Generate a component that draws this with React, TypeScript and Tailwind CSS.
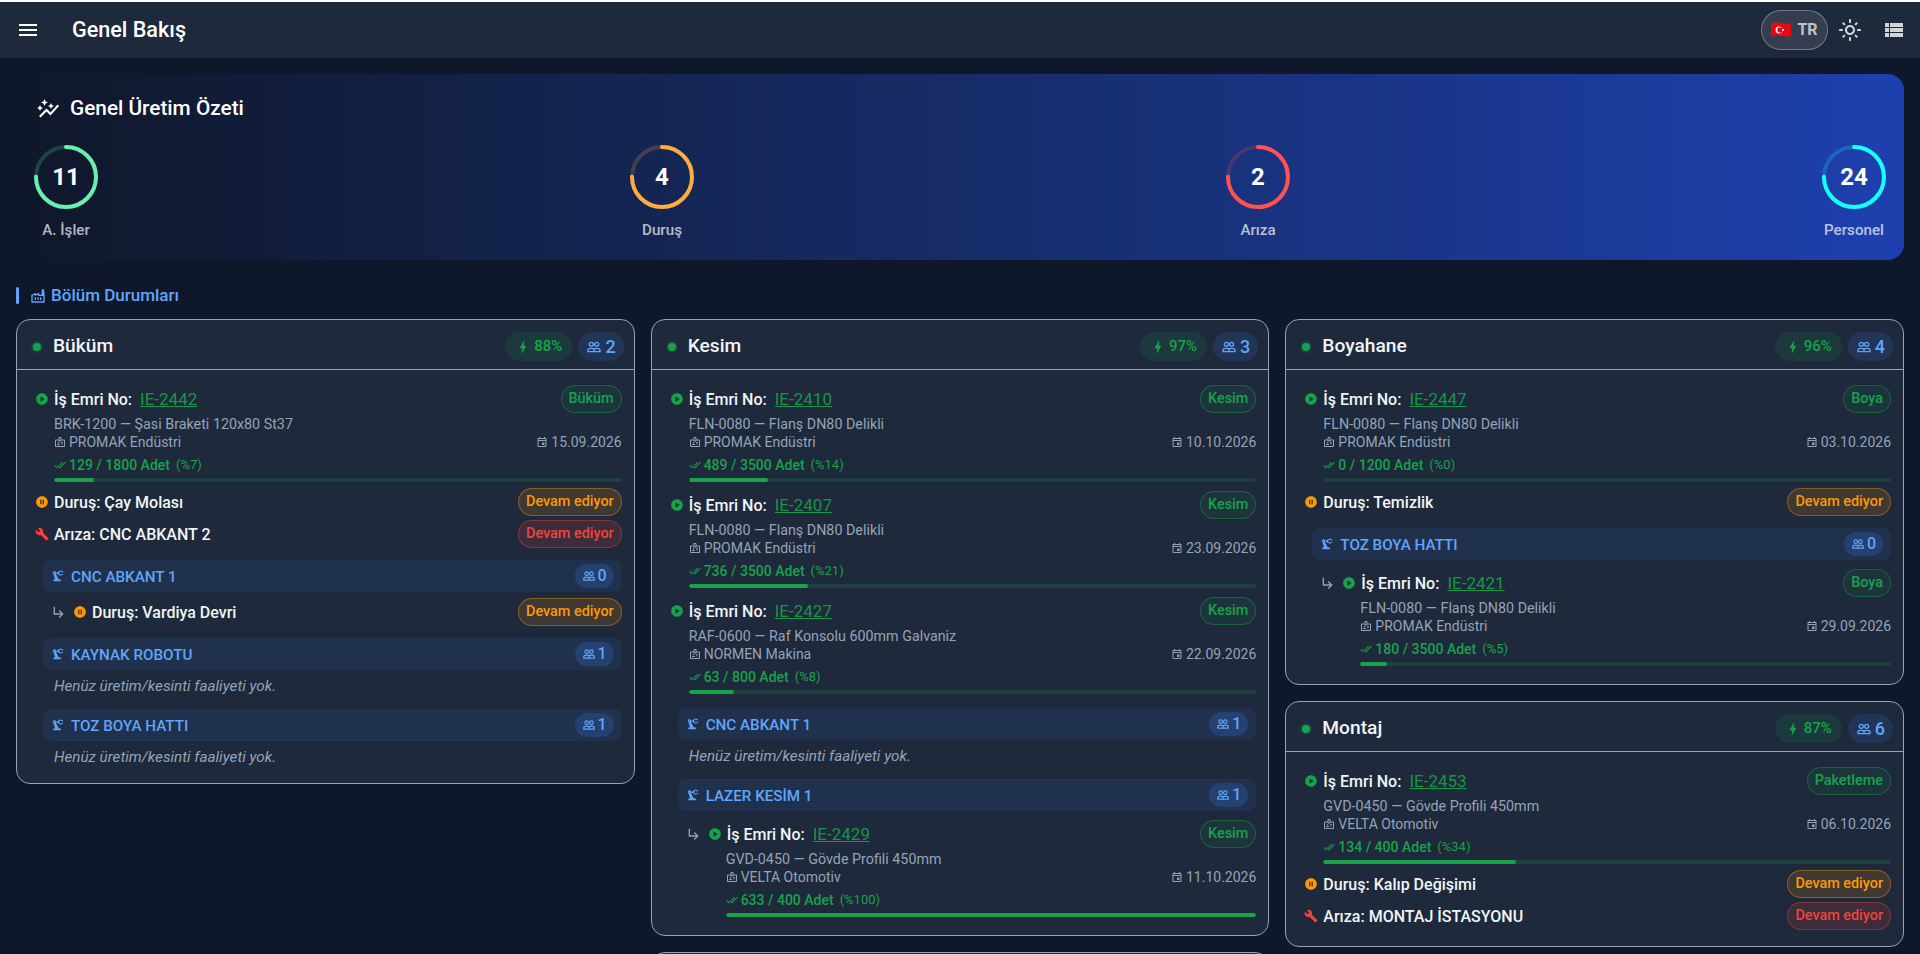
import React from "react";
import {
  MdMenu, MdAutoGraph, MdOutlineLightMode, MdViewList, MdOutlineFactory, MdPlayCircle, MdPauseCircle,
  MdBuild, MdPrecisionManufacturing, MdOutlineBadge, MdBolt, MdSubdirectoryArrowRight, MdOutlineEvent, MdDoneAll,
} from "react-icons/md";

type JobT = { id: string; dept: string; desc: string; cust: string; date: string; qty: string; pct: string; fill: number };

function People({ className }: { className: string }) {
  return (
    <svg viewBox="0 0 24 24" fill="none" stroke="currentColor" strokeWidth="2" className={className}>
      <circle cx="8" cy="8" r="3" />
      <circle cx="16" cy="8" r="3" />
      <path d="M3 19v-2.5c0-1.5 2-2.5 5-2.5 1.6 0 3 .3 4 .9 1-.6 2.4-.9 4-.9 3 0 5 1 5 2.5V19Z" />
      <path d="M12 15v4" />
    </svg>
  );
}

function Chip({ kind, children }: { kind: "green" | "orange" | "red"; children: React.ReactNode }) {
  const cls =
    kind === "green"
      ? "text-[#16a34a] bg-[#16a34a]/10 border-[#16a34a]/40"
      : kind === "orange"
      ? "text-[#ff9800] bg-[#ff9800]/15 border-[#ff9800]/40"
      : "text-[#f44336] bg-[#f44336]/15 border-[#f44336]/40";
  return (
    <span className={`h-[28px] px-[7px] pt-[1px] rounded-full border flex items-center text-[14.4px] leading-none font-medium shrink-0 ${cls}`}>
      {children}
    </span>
  );
}

function Job({ job, sub }: { job: JobT; sub?: boolean }) {
  return (
    <div className={sub ? "ml-[16px]" : ""}>
      <div className="flex items-center h-[28px]">
        {sub && <MdSubdirectoryArrowRight className="text-[#94a3b8] w-[16px] h-[16px] mr-[6px] shrink-0" />}
        <MdPlayCircle className="text-[#16a34a] w-[14px] h-[14px] mr-[5px] shrink-0" />
        <span className="pt-[1px] text-[16px] font-medium text-[#f1f5f9] mr-[8px]">İş Emri No:</span>
        <span className="pt-[1px] text-[17px] text-[#16a34a]/90 underline flex-1">{job.id}</span>
        <Chip kind="green">{job.dept}</Chip>
      </div>
      <div className={sub ? "pl-[40px]" : "pl-[19px]"}>
        <div className="text-[14.3px] leading-[18px] text-[#94a3b8] mt-[2px]">{job.desc}</div>
        <div className="text-[14px] leading-[18px] text-[#94a3b8] flex items-center justify-between">
          <span className="flex items-center gap-[3px]"><MdOutlineBadge className="w-[12px] h-[12px]" />{job.cust}</span>
          <span className="flex items-center gap-[3px]"><MdOutlineEvent className="w-[12px] h-[12px]" />{job.date}</span>
        </div>
        <div className="flex items-center gap-[3px] mt-[5px] h-[18px] text-[#16a34a]">
          <MdDoneAll className="w-[12px] h-[12px]" />
          <span className="text-[14px] font-medium">{job.qty}</span>
          <span className="text-[13px] ml-[3px]">{job.pct}</span>
        </div>
        <div className="h-[4px] mt-[4px] rounded-full bg-[#16a34a]/20 overflow-hidden">
          <div className="h-full bg-[#16a34a] rounded-full" style={{ width: `${job.fill}%` }} />
        </div>
      </div>
    </div>
  );
}

function Stop({ label, sub }: { label: string; sub?: boolean }) {
  return (
    <div className={`flex items-center h-[28px] ${sub ? "ml-[16px]" : ""}`}>
      {sub && <MdSubdirectoryArrowRight className="text-[#94a3b8] w-[16px] h-[16px] mr-[6px] shrink-0" />}
      <MdPauseCircle className="text-[#ff9800] w-[14px] h-[14px] mr-[5px] shrink-0" />
      <span className="pt-[1px] text-[16px] font-medium text-[#f1f5f9] flex-1">Duruş: {label}</span>
      <Chip kind="orange">Devam ediyor</Chip>
    </div>
  );
}

function Fault({ label }: { label: string }) {
  return (
    <div className="flex items-center h-[28px]">
      <MdBuild className="text-[#f44336] w-[14px] h-[14px] mr-[5px] shrink-0" />
      <span className="pt-[1px] text-[16px] font-medium text-[#f1f5f9] flex-1">Arıza: {label}</span>
      <Chip kind="red">Devam ediyor</Chip>
    </div>
  );
}

function Machine({ name, n }: { name: string; n: number }) {
  return (
    <div className="ml-[8px] h-[32px] px-[8px] rounded-[8px] bg-[#3b82f6]/10 flex items-center">
      <MdPrecisionManufacturing className="text-[#60a5fa] w-[14px] h-[14px] mr-[6px] shrink-0" />
      <span className="pt-[2px] text-[15.2px] font-medium text-[#60a5fa] flex-1">{name}</span>
      <span className="h-[24px] px-[7px] rounded-full bg-[#3b82f6]/20 flex items-center gap-[2px] text-[#60a5fa] text-[16px] font-medium">
        <People className="w-[14px] h-[14px]" />{n}
      </span>
    </div>
  );
}

function Empty() {
  return <div className="text-[15.2px] leading-[20px] italic text-[#94a3b8] pl-[19px]">Henüz üretim/kesinti faaliyeti yok.</div>;
}

function Card({ title, eff, people, children, pb }: { title: string; eff: string; people: number; children?: React.ReactNode; pb?: string }) {
  return (
    <div className="rounded-[14px] border border-[#94a3b8] bg-[#1e293b] shrink-0">
      <div className="h-[50px] pt-[4px] border-b border-[#94a3b8] flex items-center pl-[16px] pr-[10px]">
        <span className="w-[8px] h-[8px] rounded-full bg-[#16a34a] shadow-[0_0_0_2px_rgba(22,163,74,0.2)] mr-[12px]" />
        <span className="text-[19.2px] font-medium text-[#f1f5f9] flex-1">{title}</span>
        <span className="h-[29px] px-[10px] rounded-full bg-[#16a34a]/15 flex items-center gap-[3px] text-[#16a34a] text-[15px] font-medium">
          <MdBolt className="w-[16px] h-[16px]" />{eff}
        </span>
        <span className="h-[29px] px-[8px] ml-[6px] rounded-full bg-[#3b82f6]/15 flex items-center gap-[3px] text-[#60a5fa] text-[18px] font-medium">
          <People className="w-[16px] h-[16px]" />{people}
        </span>
      </div>
      <div className={`pl-[18px] pr-[12px] pt-[15px] ${pb ?? "pb-[16px]"}`}>{children}</div>
    </div>
  );
}

function Ring({ value, label, color, track }: { value: number; label: string; color: string; track: string }) {
  return (
    <div className="flex flex-col items-center w-[64px]">
      <div className="relative w-[64px] h-[64px]">
        <svg viewBox="0 0 64 64" className="w-[64px] h-[64px] -rotate-90">
          <circle cx="32" cy="32" r="30" fill="none" stroke={track} strokeWidth="4" />
          <circle cx="32" cy="32" r="30" fill="none" stroke={color} strokeWidth="4" strokeLinecap="round" strokeDasharray={`${2 * Math.PI * 30 * 0.75} 1000`} />
        </svg>
        <span className="absolute inset-0 flex items-center justify-center text-[24px] font-bold text-white">{value}</span>
      </div>
      <span className="mt-[11px] text-[15.2px] leading-[20px] font-medium text-white/70 whitespace-nowrap">{label}</span>
    </div>
  );
}

const P = "PROMAK Endüstri";
const F = "FLN-0080 — Flanş DN80 Delikli";
const G = "GVD-0450 — Gövde Profili 450mm";
const V = "VELTA Otomotiv";

export default function App() {
  return (
    <div className="h-[954px] overflow-hidden bg-[#0f172a] border-t-2 border-white font-['Roboto',sans-serif]">
      <header className="h-[56px] bg-[#1e293b] flex items-center pl-[16px] pr-[14px]">
        <MdMenu className="text-white w-[24px] h-[24px]" />
        <h1 className="ml-[32px] text-[21.6px] font-medium text-white flex-1">Genel Bakış</h1>
        <button className="h-[40px] w-[67px] rounded-full border border-white/30 bg-white/10 flex items-center justify-center gap-[6px] text-[16px] font-bold text-white/70">
          <svg width="20" height="16" viewBox="0 0 20 16">
            <path d="M0 2 C4 0 7 0 10 1 C14 2 17 2 20 1 V14 C17 15 14 15 10 14 C7 13 4 13 0 15 Z" fill="#e30a17" />
            <circle cx="8" cy="8" r="3.4" fill="#fff" />
            <circle cx="9" cy="8" r="2.7" fill="#e30a17" />
            <circle cx="12" cy="8" r="1.1" fill="#fff" />
          </svg>
          TR
        </button>
        <MdOutlineLightMode className="ml-[10px] text-white/80 w-[24px] h-[24px]" />
        <MdViewList className="ml-[20px] text-white/80 w-[24px] h-[24px]" />
      </header>
      <main className="px-[16px]">
        <section className="mt-[16px] h-[186px] rounded-[16px] bg-gradient-to-r from-[#0f172a] to-[#1e40af] pt-[21px] pl-[18px] pr-[18px]">
          <div className="flex items-center gap-[10px] pl-[2px] h-[28px]">
            <MdAutoGraph className="text-white w-[24px] h-[24px]" />
            <span className="text-[20.8px] font-medium text-white">Genel Üretim Özeti</span>
          </div>
          <div className="flex justify-between mt-[22px]">
            <Ring value={11} label="A. İşler" color="#69f0ae" track="rgba(105,240,174,0.2)" />
            <Ring value={4} label="Duruş" color="#ffab40" track="rgba(255,171,64,0.2)" />
            <Ring value={2} label="Arıza" color="#ff5252" track="rgba(255,82,82,0.2)" />
            <Ring value={24} label="Personel" color="#18ffff" track="rgba(24,255,255,0.2)" />
          </div>
        </section>
        <div className="mt-[27px] flex items-center h-[17px]">
          <span className="w-[3px] h-[17px] bg-[#60a5fa] rounded-sm" />
          <MdOutlineFactory className="ml-[11px] text-[#60a5fa] w-[16px] h-[16px]" />
          <span className="ml-[5px] text-[17px] font-medium text-[#60a5fa]">Bölüm Durumları</span>
        </div>
        <div className="mt-[15px] grid grid-cols-3 gap-[16px] items-start">
          <div className="flex flex-col gap-[16px]">
            <Card title="Büküm" eff="88%" people={2}>
              <Job job={{ id: "IE-2442", dept: "Büküm", desc: "BRK-1200 — Şasi Braketi 120x80 St37", cust: P, date: "15.09.2026", qty: "129 / 1800 Adet", pct: "(%7)", fill: 7 }} />
              <div className="mt-[6px] flex flex-col gap-[4px]">
                <Stop label="Çay Molası" />
                <Fault label="CNC ABKANT 2" />
              </div>
              <div className="mt-[12px]"><Machine name="CNC ABKANT 1" n={0} /></div>
              <div className="mt-[6px]"><Stop label="Vardiya Devri" sub /></div>
              <div className="mt-[12px]"><Machine name="KAYNAK ROBOTU" n={1} /></div>
              <div className="mt-[6px]"><Empty /></div>
              <div className="mt-[13px]"><Machine name="TOZ BOYA HATTI" n={1} /></div>
              <div className="mt-[6px]"><Empty /></div>
            </Card>
          </div>
          <div className="flex flex-col gap-[16px]">
            <Card title="Kesim" eff="97%" people={3} pb="pb-[18px]">
              <div className="flex flex-col gap-[9px]">
                <Job job={{ id: "IE-2410", dept: "Kesim", desc: F, cust: P, date: "10.10.2026", qty: "489 / 3500 Adet", pct: "(%14)", fill: 14 }} />
                <Job job={{ id: "IE-2407", dept: "Kesim", desc: F, cust: P, date: "23.09.2026", qty: "736 / 3500 Adet", pct: "(%21)", fill: 21 }} />
                <Job job={{ id: "IE-2427", dept: "Kesim", desc: "RAF-0600 — Raf Konsolu 600mm Galvaniz", cust: "NORMEN Makina", date: "22.09.2026", qty: "63 / 800 Adet", pct: "(%8)", fill: 8 }} />
              </div>
              <div className="mt-[14px]"><Machine name="CNC ABKANT 1" n={1} /></div>
              <div className="mt-[6px]"><Empty /></div>
              <div className="mt-[13px]"><Machine name="LAZER KESİM 1" n={1} /></div>
              <div className="mt-[9px]">
                <Job sub job={{ id: "IE-2429", dept: "Kesim", desc: G, cust: V, date: "11.10.2026", qty: "633 / 400 Adet", pct: "(%100)", fill: 100 }} />
              </div>
            </Card>
            <div className="rounded-[14px] border border-[#94a3b8] bg-[#1e293b] h-[200px] shrink-0" />
          </div>
          <div className="flex flex-col gap-[16px]">
            <Card title="Boyahane" eff="96%" people={4} pb="pb-[18px]">
              <Job job={{ id: "IE-2447", dept: "Boya", desc: F, cust: P, date: "03.10.2026", qty: "0 / 1200 Adet", pct: "(%0)", fill: 0 }} />
              <div className="mt-[6px]"><Stop label="Temizlik" /></div>
              <div className="mt-[12px]"><Machine name="TOZ BOYA HATTI" n={0} /></div>
              <div className="mt-[9px]">
                <Job sub job={{ id: "IE-2421", dept: "Boya", desc: F, cust: P, date: "29.09.2026", qty: "180 / 3500 Adet", pct: "(%5)", fill: 5 }} />
              </div>
            </Card>
            <Card title="Montaj" eff="87%" people={6}>
              <Job job={{ id: "IE-2453", dept: "Paketleme", desc: G, cust: V, date: "06.10.2026", qty: "134 / 400 Adet", pct: "(%34)", fill: 34 }} />
              <div className="mt-[6px] flex flex-col gap-[4px]">
                <Stop label="Kalıp Değişimi" />
                <Fault label="MONTAJ İSTASYONU" />
              </div>
            </Card>
          </div>
        </div>
      </main>
    </div>
  );
}
